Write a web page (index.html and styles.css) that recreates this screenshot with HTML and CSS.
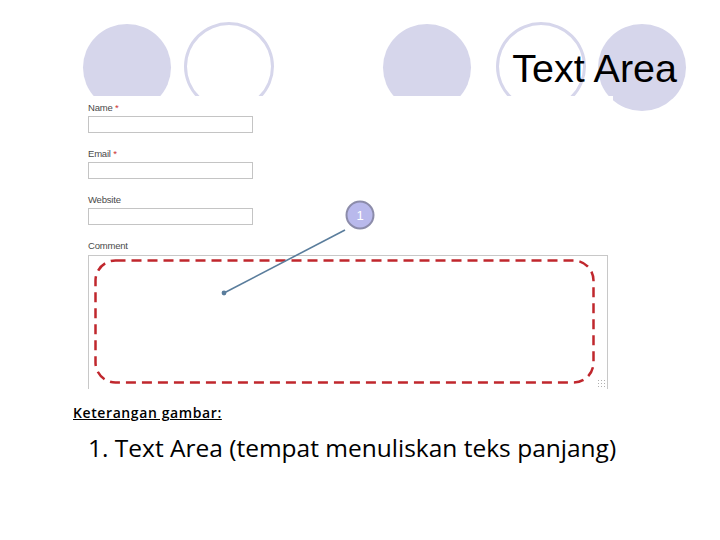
FILE: index.html
```
<!DOCTYPE html>
<html>
<head>
<meta charset="utf-8">
<link rel="stylesheet" href="styles.css">
</head>
<body>
<div class="slide">
  <div class="decor">
    <span class="oval fill o1"></span>
    <span class="oval ring o2"></span>
    <span class="oval fill o3"></span>
    <span class="oval ring o4"></span>
    <span class="oval fill o5"></span>
  </div>
  <header class="title-bar"><h1 class="title">Text Area</h1></header>
  <div class="shot">
    <form class="comment-form">
      <div class="field">
        <label class="lbl">Name <span class="req">*</span></label>
        <div class="input"></div>
      </div>
      <div class="field">
        <label class="lbl">Email <span class="req">*</span></label>
        <div class="input"></div>
      </div>
      <div class="field">
        <label class="lbl">Website</label>
        <div class="input"></div>
      </div>
      <div class="field">
        <label class="lbl">Comment</label>
        <div class="textarea"><span class="grip"></span></div>
      </div>
    </form>
    <svg class="overlay" width="530" height="299" viewBox="0 0 530 299">
      <rect x="12.5" y="164.5" width="498" height="122" rx="20" ry="20" fill="none" stroke="#c0272d" stroke-width="2.5" stroke-dasharray="10 6"/>
      <line x1="262" y1="134" x2="141" y2="197" stroke="#5a7d9c" stroke-width="1.6"/>
      <circle cx="141" cy="197" r="2.4" fill="#5a7d9c"/>
      <circle cx="277" cy="119" r="13.5" fill="#b9b9ec" stroke="#8c8caa" stroke-width="2"/>
      <text x="277" y="124" text-anchor="middle" font-family="Liberation Sans, Arial, sans-serif" font-size="13" fill="#ffffff">1</text>
    </svg>
  </div>
  <div class="caption">
    <p class="cap-title">Keterangan gambar:</p>
    <ol class="cap-list">
      <li>Text Area (tempat menuliskan teks panjang)</li>
    </ol>
  </div>
</div>
</body>
</html>
```
FILE: styles.css
```
html, body {
  margin: 0;
  padding: 0;
  background: #ffffff;
}
.slide {
  position: relative;
  width: 720px;
  height: 540px;
  overflow: hidden;
  font-family: "Liberation Sans", Arial, sans-serif;
}
.decor {
  position: absolute;
  left: 0;
  top: 0;
  width: 720px;
  height: 130px;
  z-index: 0;
}
.oval {
  position: absolute;
  top: 24px;
  width: 88px;
  height: 87px;
  border-radius: 50%;
  box-sizing: border-box;
}
.fill { background: #d6d6eb; }
.ring { border: 3px solid #d6d6eb; background: transparent; top: 22px; width: 90px; height: 89px; }
.o1 { left: 83px; }
.o2 { left: 184px; }
.o3 { left: 383px; }
.o4 { left: 496px; }
.o5 { left: 598px; }
.title-bar {
  position: relative;
  z-index: 2;
  height: 96px;
  box-sizing: border-box;
  display: flex;
  justify-content: flex-end;
  align-items: flex-start;
  padding: 49px 43px 0 0;
}
.title {
  margin: 0;
  font-family: "Liberation Sans", Arial, sans-serif;
  font-weight: normal;
  font-size: 39.5px;
  line-height: 38px;
  color: #000000;
}
.shot {
  position: relative;
  z-index: 1;
  margin-left: 83px;
  width: 530px;
  height: 299px;
  background: #ffffff;
}
.comment-form {
  margin: 0;
  padding: 6px 0 0 5px;
}
.field {
  margin-bottom: 15px;
}
.lbl {
  display: block;
  font-size: 9.5px;
  line-height: 12px;
  color: #4a4a4a;
  letter-spacing: -0.2px;
}
.req { color: #cc3333; }
.input {
  margin-top: 2px;
  width: 165px;
  height: 17px;
  box-sizing: border-box;
  border: 1px solid #c4c4c4;
  background: #ffffff;
}
.textarea {
  position: relative;
  margin-top: 3px;
  width: 520px;
  height: 134px;
  box-sizing: border-box;
  border: 1px solid #c8c8c8;
  border-bottom: none;
}
.grip {
  position: absolute;
  right: 2px;
  bottom: 2px;
  width: 8px;
  height: 8px;
  background-image: radial-gradient(circle, #b0b0b0 0.8px, transparent 1px);
  background-size: 3px 3px;
}
.overlay {
  position: absolute;
  left: 0;
  top: 0;
}
.caption {
  font-family: "Open Sans", "Liberation Sans", sans-serif;
  color: #000000;
}
.cap-title {
  margin: 9px 0 0 73px;
  font-size: 14px;
  font-weight: 600;
  line-height: 18px;
  letter-spacing: 0.6px;
  text-decoration: underline;
}
.cap-list {
  margin: 11px 0 0 0;
  padding-left: 88px;
  list-style-position: inside;
  font-size: 24.5px;
  line-height: 30px;
}
```
